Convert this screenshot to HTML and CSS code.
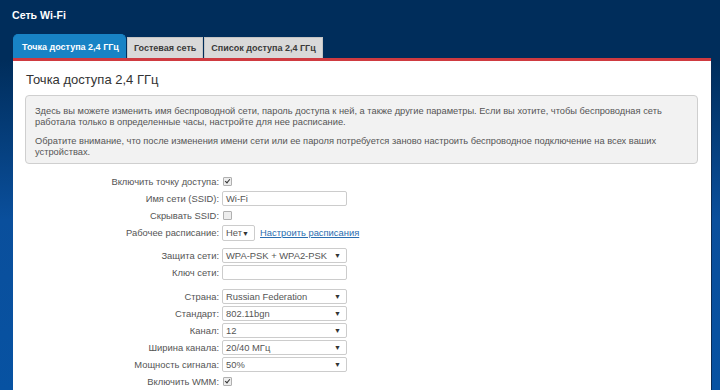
FILE: index.html
```html
<!DOCTYPE html>
<html lang="ru">
<head>
<meta charset="utf-8">
<title>Сеть Wi-Fi</title>
<link rel="stylesheet" href="styles.css">
</head>
<body>
<div class="page">
  <header class="topbar">
    <h1 class="title">Сеть Wi-Fi</h1>
    <nav class="tabs">
      <span class="tab tab-active">Точка доступа 2,4 ГГц</span>
      <span class="tab">Гостевая сеть</span>
      <span class="tab">Список доступа 2,4 ГГц</span>
    </nav>
  </header>
  <main class="panel">
    <h2 class="heading">Точка доступа 2,4 ГГц</h2>
    <div class="info">
      <p>Здесь вы можете изменить имя беспроводной сети, пароль доступа к ней, а также другие параметры. Если вы хотите, чтобы беспроводная сеть работала только в определенные часы, настройте для нее расписание.</p>
      <p>Обратите внимание, что после изменения имени сети или ее пароля потребуется заново настроить беспроводное подключение на всех ваших устройствах.</p>
    </div>
    <div class="form">
      <div class="group">
        <div class="row"><span class="label">Включить точку доступа:</span><span class="check on"></span></div>
        <div class="row"><span class="label">Имя сети (SSID):</span><span class="field">Wi-Fi</span></div>
        <div class="row"><span class="label">Скрывать SSID:</span><span class="check"></span></div>
        <div class="row"><span class="label">Рабочее расписание:</span><span class="ctrl"><span class="select small">Нет<span class="arrow">▼</span></span><a class="link" href="#">Настроить расписания</a></span></div>
      </div>
      <div class="group g2">
        <div class="row"><span class="label">Защита сети:</span><span class="select">WPA-PSK + WPA2-PSK<span class="arrow">▼</span></span></div>
        <div class="row"><span class="label">Ключ сети:</span><span class="field"></span></div>
      </div>
      <div class="group g3">
        <div class="row"><span class="label">Страна:</span><span class="select">Russian Federation<span class="arrow">▼</span></span></div>
        <div class="row"><span class="label">Стандарт:</span><span class="select">802.11bgn<span class="arrow">▼</span></span></div>
        <div class="row"><span class="label">Канал:</span><span class="select">12<span class="arrow">▼</span></span></div>
        <div class="row"><span class="label">Ширина канала:</span><span class="select">20/40 МГц<span class="arrow">▼</span></span></div>
        <div class="row"><span class="label">Мощность сигнала:</span><span class="select">50%<span class="arrow">▼</span></span></div>
        <div class="row"><span class="label">Включить WMM:</span><span class="check on"></span></div>
      </div>
    </div>
  </main>
</div>
</body>
</html>
```
FILE: styles.css
```css
html, body {
  margin: 0;
  height: 100%;
}
body {
  font-family: "Liberation Sans", Arial, sans-serif;
  background: linear-gradient(to bottom, #002d5b 0, #002d5b 60px, #0a4f9c 220px, #0752a2 100%);
  overflow: hidden;
}
.page {
  padding: 0 9px 0 13px;
  height: 100%;
  display: flex;
  flex-direction: column;
}
.topbar {
  margin: 0 -9px 0 -13px;
  padding: 0 9px 0 13px;
  background: #002d5b;
}
.title {
  margin: 0 0 0 -1px;
  padding-top: 9px;
  font-size: 10.6px;
  line-height: 13px;
  font-weight: bold;
  color: #ffffff;
}
.tabs {
  margin-top: 12px;
  display: flex;
  align-items: flex-end;
  gap: 1px;
}
.tab {
  height: 21px;
  padding: 0 6px;
  display: flex;
  align-items: center;
  box-sizing: border-box;
  background: #d9d9d9;
  border: 1px solid #c4c4c4;
  border-bottom: none;
  color: #3a3a3a;
  font-size: 9px;
  font-weight: bold;
}
.tab-active {
  height: 24px;
  padding: 0 6px 0 8px;
  background: #1883c5;
  border-color: #1883c5;
  border-radius: 5px 5px 0 0;
  color: #ffffff;
}
.panel {
  flex: 1;
  background: #ffffff;
  border-top: 3px solid #cf3a40;
  padding: 0 13px 0 12px;
  box-shadow: 1px 0 0 #0b2c55;
  overflow: hidden;
}
.heading {
  margin: 11px 0 7px 1px;
  font-size: 13px;
  line-height: 16px;
  font-weight: normal;
  color: #333333;
}
.info {
  background: #f2f2f2;
  border: 1px solid #cfcfcf;
  border-radius: 4px;
  padding: 10px 9px 6px 9px;
  color: #555555;
  font-size: 9.3px;
  line-height: 10.5px;
}
.info p {
  margin: 0 0 9px 0;
}
.info p:last-child {
  margin: 0;
}
.form {
  margin-top: 9px;
  display: flex;
  flex-direction: column;
}
.g2 {
  margin-top: 6px;
}
.g3 {
  margin-top: 7px;
}
.row {
  display: grid;
  grid-template-columns: 194px auto;
  column-gap: 3px;
  align-items: center;
  height: 17px;
}
.label {
  text-align: right;
  font-size: 9.4px;
  color: #555555;
}
.ctrl {
  display: flex;
  align-items: center;
  gap: 5px;
}
.field, .select {
  box-sizing: border-box;
  width: 125px;
  height: 15px;
  border: 1px solid #cccccc;
  border-radius: 2px;
  background: #ffffff;
  font-size: 9.4px;
  color: #555555;
  padding: 0 3px;
  display: flex;
  align-items: center;
  position: relative;
}
.select .arrow {
  position: absolute;
  right: 5px;
  top: 3px;
  font-size: 7px;
  color: #333333;
}
.select.small {
  width: 33px;
  height: 16px;
}
.select.small .arrow {
  right: 5px;
  top: 4px;
}
.link {
  font-size: 9.4px;
  color: #2a6db0;
  text-decoration: underline;
}
.check {
  box-sizing: border-box;
  width: 9px;
  height: 9px;
  margin-left: 1px;
  border: 1px solid #b0b0b0;
  border-radius: 1px;
  background: #ededed;
  position: relative;
}
.check.on::after {
  content: "";
  position: absolute;
  left: 2px;
  top: 0px;
  width: 2px;
  height: 4px;
  border: solid #333333;
  border-width: 0 1.5px 1.5px 0;
  transform: rotate(40deg);
}
```
